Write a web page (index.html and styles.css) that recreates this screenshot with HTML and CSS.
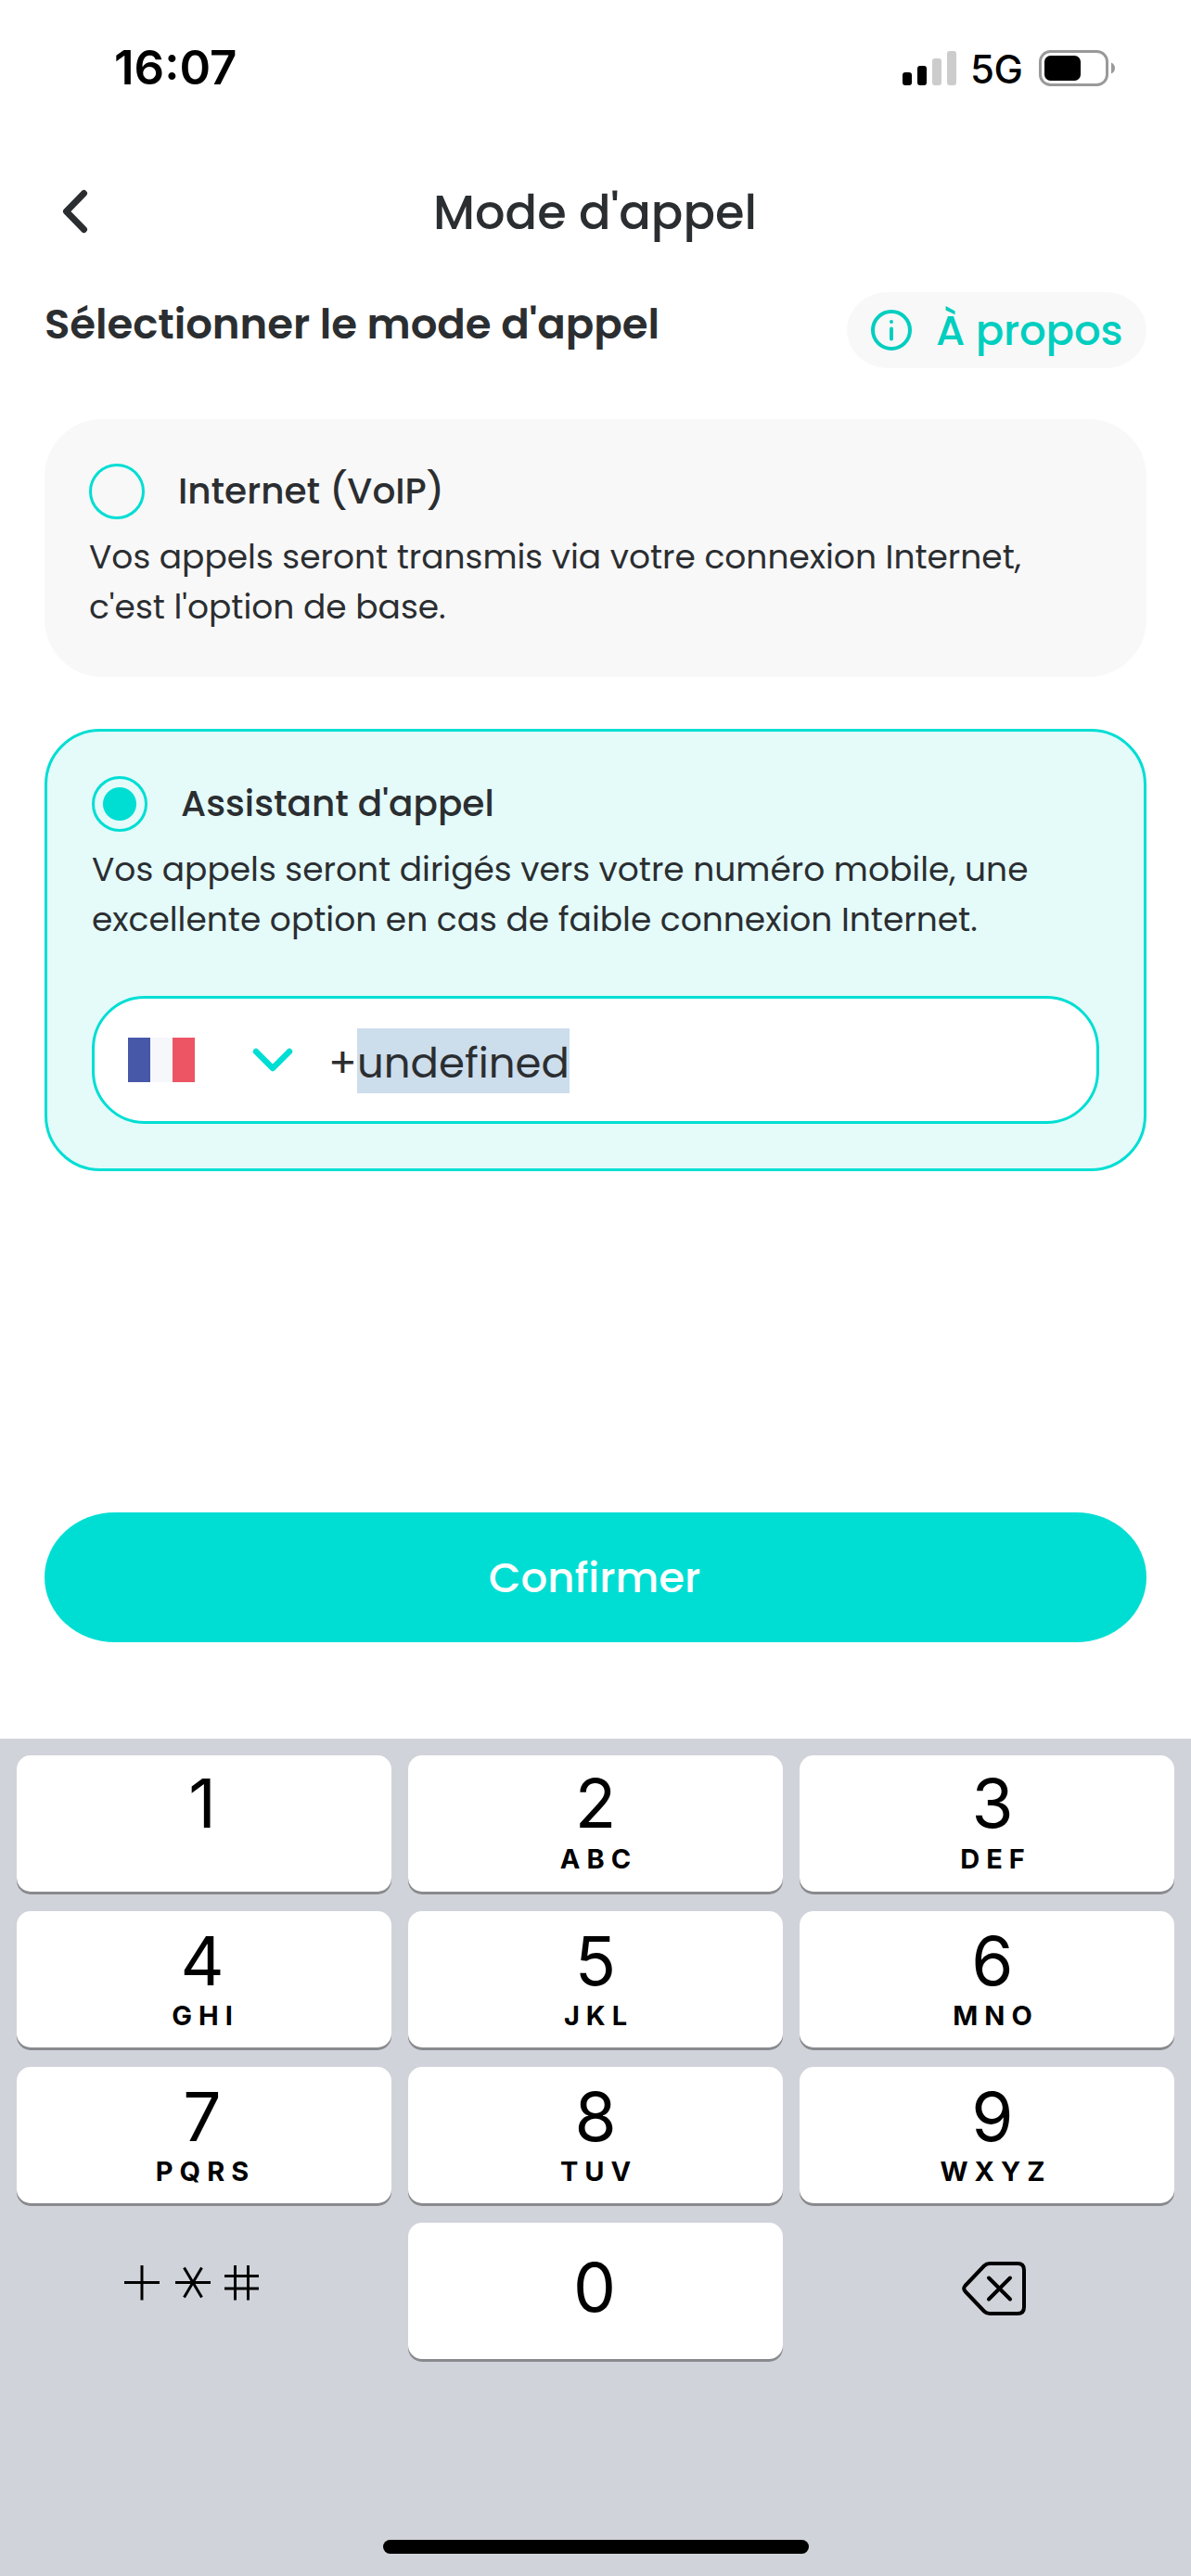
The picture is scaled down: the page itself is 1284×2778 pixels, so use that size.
FILE: index.html
```html
<!DOCTYPE html>
<html lang="fr">
<head>
  <meta charset="UTF-8" />
  <meta name="viewport" content="width=device-width, initial-scale=1.0" />
  <title>Mode d'appel</title>
  <link rel="stylesheet" href="styles.css">
</head>
<body>

<div class="status-bar">
  <div class="time">16:07</div>
  <div class="status-icons">
    <svg class="signal" width="58" height="37" viewBox="0 0 58 37">
      <rect x="0" y="23" width="10" height="14" rx="3" fill="#000"/>
      <rect x="16" y="16" width="10" height="21" rx="3" fill="#000"/>
      <rect x="32" y="8" width="10" height="29" rx="3" fill="#ccc"/>
      <rect x="48" y="0" width="10" height="37" rx="3" fill="#ccc"/>
    </svg>
    <span class="network">5G</span>
    <svg width="82" height="39" viewBox="0 0 82 39">
      <rect x="1.5" y="1.5" width="72" height="36" rx="11" fill="none" stroke="#999" stroke-width="3"/>
      <rect x="6" y="6" width="39" height="27" rx="6.5" fill="#000"/>
      <path d="M78 13.5c2.400 1 4 3.300 4 6s-1.600 5-4 6z" fill="#999"/>
    </svg>
  </div>
</div>

<header>
  <svg class="back" width="32" height="50" viewBox="0 0 32 50" fill="none" stroke="#2b2e31" stroke-width="7" stroke-linecap="round" stroke-linejoin="round">
    <path d="M25.500 4.500L6.500 24L25.500 43.500"/>
  </svg>
  <h1>Mode d'appel</h1>
</header>

<main>
  <div class="section-head">
    <h2>Sélectionner le mode d'appel</h2>
    <button class="about">
      <svg class="info" width="44" height="44" viewBox="0 0 44 44" fill="none" stroke="#00cebf" stroke-width="4" stroke-linecap="round">
        <circle cx="22" cy="22" r="20"/>
        <path d="M22 20.500v11"/>
        <circle cx="22" cy="13" r="2" fill="#00cebf" stroke="none"/>
      </svg>
      <span>À propos</span>
    </button>
  </div>

  <div class="card">
    <div class="option">
      <span class="radio"></span>
      <h3>Internet (VoIP)</h3>
    </div>
    <p>Vos appels seront transmis via votre connexion Internet,<br>c'est l'option de base.</p>
  </div>

  <div class="card selected">
    <div class="option">
      <span class="radio checked"></span>
      <h3>Assistant d'appel</h3>
    </div>
    <p>Vos appels seront dirigés vers votre numéro mobile, une<br>excellente option en cas de faible connexion Internet.</p>
    <div class="phone-input">
      <div class="flag"><i class="blue"></i><i class="white"></i><i class="red"></i></div>
      <svg class="chevron" width="44" height="28" viewBox="0 0 44 28" fill="none" stroke="#00ded3" stroke-width="6.500" stroke-linecap="round" stroke-linejoin="round">
        <path d="M4 5L22 23L40 5"/>
      </svg>
      <span class="prefix">+</span><span class="selection">undefined</span>
    </div>
  </div>

  <button class="confirm">Confirmer</button>
</main>

<div class="keyboard">
  <div class="keys">
    <div class="key"><b>1</b></div>
    <div class="key"><b>2</b><small>ABC</small></div>
    <div class="key"><b>3</b><small>DEF</small></div>
    <div class="key"><b>4</b><small>GHI</small></div>
    <div class="key"><b>5</b><small>JKL</small></div>
    <div class="key"><b>6</b><small>MNO</small></div>
    <div class="key"><b>7</b><small>PQRS</small></div>
    <div class="key"><b>8</b><small>TUV</small></div>
    <div class="key"><b>9</b><small>WXYZ</small></div>
    <div class="key plain symbols">
      <svg width="146" height="39" viewBox="0 0 146 39" fill="none" stroke="#000" stroke-width="3">
        <path d="M0 18.500H38M19 0V37.500"/>
        <path d="M55 18.500H93M64.500 2.500L83.500 34.500M83.500 2.500L64.500 34.500"/>
        <path d="M108 11.500H145M108 25H145M119.500 0V37.500M133.500 0V37.500"/>
      </svg>
    </div>
    <div class="key zero"><b>0</b></div>
    <div class="key plain delete">
      <svg width="70" height="58" viewBox="0 0 70 58" fill="none" stroke="#000" stroke-width="4" stroke-linecap="round" stroke-linejoin="round">
        <path d="M30 2H60Q67 2 67 9V49Q67 56 60 56H30Q26.500 56 24 53.500L3.500 32Q1 29 3.500 26L24 4.500Q26.500 2 30 2Z"/>
        <path d="M29 17.500L52 40.500M52 17.500L29 40.500"/>
      </svg>
    </div>
  </div>
  <div class="home-bar"></div>
</div>

</body>
</html>
```
FILE: styles.css
```css
* {
  box-sizing: border-box;
}
body {
  margin: 0;
  height: 2778px;
  display: flex;
  flex-direction: column;
  font-family: Poppins, Inter, sans-serif;
  background-color: #fff;
  color: #2b2e31;
}
h1, h2, h3, p {
  margin: 0;
}
button {
  border: none;
  font-family: inherit;
}

/* status bar */
.status-bar {
  height: 142px;
  padding: 0 82px 0 123px;
  display: flex;
  justify-content: space-between;
  align-items: center;
  font-family: Inter, sans-serif;
  color: #000;
}
.time {
  font-size: 51px;
  font-weight: 600;
  line-height: 60px;
  padding-top: 4px;
}
.status-icons {
  display: flex;
  align-items: center;
  padding-top: 4px;
}
.network {
  width: 89px;
  padding: 4px 0 0 15px;
  font-size: 42px;
  font-weight: 500;
  line-height: 48px;
  letter-spacing: -0.5px;
}

header {
  height: 173px;
  display: grid;
  grid-template-columns: 112px 1fr 113px;
  align-items: center;
}
.back {
  margin-left: 65px;
}
h1 {
  font-size: 51px;
  font-weight: 500;
  line-height: 70px;
  text-align: center;
}

main {
  flex: 1;
  padding: 0 48px;
  display: flex;
  flex-direction: column;
}
.section-head {
  display: flex;
  justify-content: space-between;
  height: 82px;
  margin-bottom: 55px;
}
h2 {
  font-size: 45px;
  font-weight: 600;
  line-height: 70px;
  letter-spacing: -0.05px;
}
.about {
  display: flex;
  align-items: center;
  gap: 26px;
  width: 323px;
  padding: 2px 0 0 26px;
  border-radius: 44px / 41px;
  background: #f8f8f8;
  color: #00cebf;
  font-size: 45px;
  font-weight: 500;
  letter-spacing: -0.2px;
}
.info {
  margin-bottom: 2px;
}

/* call mode cards */
.card {
  padding: 48px;
  border-radius: 62px;
  background: #f8f8f8;
  margin-bottom: 56px;
}
.card.selected {
  border: 3px solid #00ded3;
  border-radius: 60px;
  background: #e4fbfa;
}
.option {
  display: flex;
  align-items: center;
  height: 60px;
  gap: 36px;
  margin-bottom: 14px;
}
.radio {
  width: 60px;
  height: 60px;
  border: 3px solid #00ded3;
  border-radius: 50%;
}
.radio.checked {
  background: radial-gradient(circle, #00ded3 17.5px, transparent 18.5px);
}
h3 {
  font-size: 39px;
  font-weight: 500;
  line-height: 60px;
}
.card p {
  font-size: 36px;
  line-height: 54px;
}
.phone-input {
  display: flex;
  align-items: center;
  height: 138px;
  margin-top: 55px;
  padding-left: 36px;
  border: 3px solid #00ded3;
  border-radius: 57px;
  background: #fff;
  font-size: 45px;
}
.flag {
  display: flex;
  width: 72px;
  height: 48px;
}
.flag i {
  flex: 1;
}
.blue {
  background: #4758a9;
}
.white {
  background: #f5f7fb;
}
.red {
  background: #ed5565;
}
.chevron {
  margin: 0 38px 0 62px;
}
.prefix, .selection {
  height: 70px;
  margin-top: 2px;
  line-height: 75px;
}
.prefix {
  width: 31px;
}
.selection {
  background: #ccddec;
}

.confirm {
  height: 140px;
  margin-top: auto;
  margin-bottom: 104px;
  padding: 2px 2px 0 0;
  border-radius: 76px / 70px;
  background: #00ded3;
  color: #fff;
  font-size: 45px;
  font-weight: 500;
}

/* numeric keyboard */
.keyboard {
  height: 903px;
  padding: 18px 18px 24px;
  display: flex;
  flex-direction: column;
  align-items: center;
  justify-content: space-between;
  background: #d0d3da;
  font-family: Inter, sans-serif;
  color: #000;
}
.keys {
  width: 100%;
  display: grid;
  grid-template-columns: repeat(3, 1fr);
  grid-auto-rows: 147px;
  gap: 21px 18px;
}
.key {
  display: flex;
  flex-direction: column;
  align-items: center;
  padding-top: 10px;
  border-radius: 15px;
  background: #fff;
  box-shadow: 0 3px 0 #898a8d;
}
/* labels of the outer columns sit slightly off centre */
.key:nth-child(3n+1) {
  padding-right: 4px;
}
.key:nth-child(3n) {
  padding-left: 12px;
}
.key b {
  font-size: 73px;
  font-weight: 400;
  line-height: 88px;
}
.key:nth-child(-n+3) b {
  line-height: 83px;
  margin-bottom: 4px;
}
.key small {
  font-size: 29px;
  font-weight: 700;
  line-height: 30px;
  letter-spacing: 7px;
  margin-right: -7px;
}
.key.zero {
  padding: 26px 2px 0 0;
}
.key.plain {
  background: none;
  box-shadow: none;
}
.key.symbols {
  align-items: flex-start;
  padding: 46px 0 0 116px;
}
.key.delete {
  align-items: flex-start;
  padding: 42px 0 0 175px;
}
.home-bar {
  width: 459px;
  height: 15px;
  border-radius: 8px;
  background: #000;
}
```
